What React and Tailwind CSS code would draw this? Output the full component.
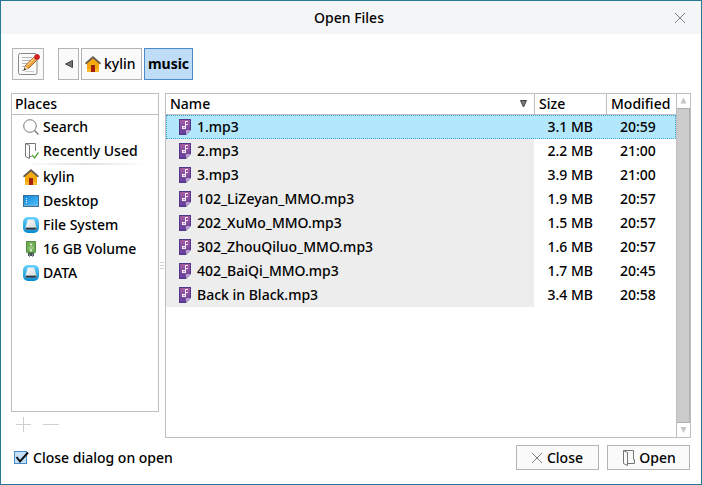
import { useState } from "react";

const files = [
  ["1.mp3", "3.1 MB", "20:59"],
  ["2.mp3", "2.2 MB", "21:00"],
  ["3.mp3", "3.9 MB", "21:00"],
  ["102_LiZeyan_MMO.mp3", "1.9 MB", "20:57"],
  ["202_XuMo_MMO.mp3", "1.5 MB", "20:57"],
  ["302_ZhouQiluo_MMO.mp3", "1.6 MB", "20:57"],
  ["402_BaiQi_MMO.mp3", "1.7 MB", "20:45"],
  ["Back in Black.mp3", "3.4 MB", "20:58"],
];

function HomeIcon() {
  return (
    <svg width="16" height="16" viewBox="0 0 16 16" className="shrink-0" aria-hidden="true">
      <path d="M2 7 8 2l6 5v9H2z" fill="#f5a90c" />
      <path d="M2 13h12v3H2z" fill="#f8bb2c" />
      <path d="M6 9h4v7H6z" fill="#a31e0c" />
      <path d="M6 9h4v1H6z" fill="#7c3510" />
      <path d="M8 0 0 7l1 1.4L8 2.6l7 5.8L16 7z" fill="#655a4c" />
    </svg>
  );
}

function SearchIcon() {
  return (
    <svg width="16" height="16" viewBox="0 0 16 16" className="shrink-0" fill="none" stroke="#777" aria-hidden="true">
      <circle cx="7" cy="7" r="6.3" />
      <path d="m11.5 11.5 4 4" strokeWidth="1.2" />
    </svg>
  );
}

function FolderIcon({ checked = false }) {
  return (
    <svg width="16" height="16" viewBox="0 0 16 16" className="shrink-0" fill="none" stroke="#777" aria-hidden="true">
      <path d="M2.500.5v13l4 2v-13l-4-2h10V8" />
      {checked ? (
        <>
          <path d="M6.500 13.500h2" />
          <path d="m9 12 2.500 3L15.500 9.500" stroke="#58a83b" strokeWidth="1.300" />
        </>
      ) : (
        <path d="M12.500 8v1.500h1v4h-7" />
      )}
    </svg>
  );
}

function DesktopIcon() {
  return (
    <svg width="16" height="16" viewBox="0 0 16 16" className="shrink-0" aria-hidden="true">
      <defs>
        <linearGradient id="screen" x1="0" x2="1" y1="0" y2="1">
          <stop stopColor="#1286d9" />
          <stop offset="1" stopColor="#4fc0fb" />
        </linearGradient>
      </defs>
      <path d="M0 2h16v12H0z" fill="#3d6f96" />
      <path d="M1 3h14v9H1z" fill="url(#screen)" />
      <path d="M3 5h1v1H3zm0 2h1v1H3zm0 2h1v1H3z" fill="#fff" />
      <path d="M1 12h14v1H1z" fill="#75b4da" />
    </svg>
  );
}

function DriveIcon() {
  return (
    <svg width="16" height="16" viewBox="0 0 16 16" className="shrink-0" aria-hidden="true">
      <defs>
        <linearGradient id="drive" x1="0" x2="0" y1="0" y2="1">
          <stop stopColor="#69d2fa" />
          <stop offset="1" stopColor="#078bd3" />
        </linearGradient>
        <linearGradient id="case" x1="0" x2="1" y1="0" y2="1">
          <stop stopColor="#fff" />
          <stop offset="1" stopColor="#cfd3d6" />
        </linearGradient>
      </defs>
      <rect width="16" height="16" rx="5" fill="url(#drive)" />
      <path d="M4.500 3.500Q4.500 2.500 5.500 2.500h5q1 0 1 1L13.500 10.500v2h-11v-2z" fill="url(#case)" />
      <path d="M2.500 10.500h11v2.500h-11z" fill="#4c6472" />
      <path d="M3.500 11h9v1h-9z" fill="#26343d" />
    </svg>
  );
}

function UsbIcon() {
  return (
    <svg width="16" height="16" viewBox="0 0 16 16" className="shrink-0" aria-hidden="true">
      <path d="M3 0h10v11l-1 1H4l-1-1z" fill="#568b43" />
      <path d="M4 1h8v10H4z" fill="#70ae53" />
      <path d="M8 10V4M6 6v1.500L8 9l2-1.500V5.500" fill="none" stroke="#c7e2b9" strokeWidth=".8" />
      <path d="M6.500 4 8 2l1.500 2z" fill="#e4f1dc" />
      <circle cx="8" cy="9.500" r="1" fill="#e4f1dc" />
      <path d="M5 12h6v3H5z" fill="#48535a" />
      <path d="M6 13h1v3H6zm3 0h1v3H9z" fill="#899198" />
    </svg>
  );
}

function MusicIcon() {
  return (
    <svg width="12" height="16" viewBox="0 0 12 16" className="shrink-0" aria-hidden="true">
      <defs>
        <linearGradient id="music" x1="0" x2="0" y1="0" y2="1">
          <stop stopColor="#a85ca4" />
          <stop offset="1" stopColor="#603e99" />
        </linearGradient>
      </defs>
      <path d="M0 0h12v11l-5 5H0z" fill="#51388c" />
      <path d="M1 1h10v9l-5 5H1z" fill="url(#music)" />
      <path d="M7 16v-5h5z" fill="#b7a0d0" />
      <path d="M6 2h3v1H7v2h2v1H7v4H3V7h3z" fill="#f5ebf7" />
      <path d="M4 8h2v1H4z" fill="#b58cc0" />
    </svg>
  );
}

function EditIcon() {
  return (
    <svg width="24" height="24" viewBox="0 0 24 24" className="shrink-0" aria-hidden="true">
      <path d="M4.500 1.500H19q2 0 2 2v17q0 2-2 2H4.500q-2 0-2-2v-17q0-2 2-2z" fill="#fafafa" stroke="#898a87" />
      <path d="M6 5.500h10M6 8.500h8M6 11.500h6M6 14.500h3M6 18.500h2" stroke="#b6b6b6" />
      <path d="M9 19.500h9" stroke="#ccc" />
      <path d="m8 18 1.800-5L18 5l3 3-8 8z" fill="#f3a33a" stroke="#8d5418" strokeWidth=".8" />
      <path d="m10.500 13 7.500-7.500 1 1-7.500 7.500z" fill="#ffc877" />
      <path d="m8 18 1.500-4 2.500 2.500z" fill="#ead7b5" />
      <path d="m7.700 18.300.8-2.300 1.500 1.500z" fill="#222" />
      <path d="m17.500 5.500 1.500-1.500 3 3-1.500 1.500z" fill="#bcc2c4" />
      <circle cx="21" cy="5" r="2.500" fill="#dc1d20" stroke="#a40a0d" strokeWidth=".6" />
    </svg>
  );
}

function CrossIcon() {
  return (
    <svg width="10" height="10" viewBox="0 0 10 10" fill="none" stroke="#808080" aria-hidden="true">
      <path d="m0 0 10 10M10 0 0 10" />
    </svg>
  );
}

const places = [
  ["Search", <SearchIcon />],
  ["Recently Used", <FolderIcon checked />],
  ["kylin", <HomeIcon />],
  ["Desktop", <DesktopIcon />],
  ["File System", <DriveIcon />],
  ["16 GB Volume", <UsbIcon />],
  ["DATA", <DriveIcon />],
];

export default function App() {
  const [selected, setSelected] = useState("1.mp3");

  return (
    <main className="flex min-h-screen flex-col border border-[#2a7898] bg-white font-['Noto_Sans',sans-serif] text-sm leading-5 font-medium text-black">
      <header className="grid h-[33px] grid-cols-[1fr_auto_1fr] items-center bg-[#f4f5f7] pr-4">
        <h1 className="col-start-2 pl-3 font-medium">Open Files</h1>
        <button aria-label="Close window" className="justify-self-end"><CrossIcon /></button>
      </header>

      <nav className="mx-[11px] mt-[14px] flex h-8 items-stretch" aria-label="Folder path">
        <button aria-label="Type a file name" className="mr-[14px] flex w-8 items-center justify-center border border-[#b4b4b4] bg-[#fafafa]"><EditIcon /></button>
        <button aria-label="Back" className="mr-0.5 flex w-[21px] items-center justify-center border border-[#b4b4b4] bg-[#fafafa]">
          <svg width="8" height="8" viewBox="0 0 8 8" aria-hidden="true"><path d="M7.500.5v7L.5 4z" fill="#777" stroke="#444" /></svg>
        </button>
        <button className="mr-0.5 flex w-[61px] items-center gap-[3px] border border-[#b4b4b4] bg-[#fafafa] pl-[3px]"><HomeIcon />kylin</button>
        <button className="w-[49px] border border-[#4a8ac6] bg-[#bfddf9] font-bold">music</button>
      </nav>

      <div className="mt-[13px] flex flex-1 pr-[10px] pl-[10px]">
        <aside className="flex w-[148px] shrink-0 flex-col">
          <section className="flex-1 border border-[#bfbfbf]">
            <h2 className="h-[21px] border-b border-[#bfbfbf] pl-[3px] font-medium">Places</h2>
            <ul>
              {places.map(([name, icon], i) => (
                <li key={name}>
                  {i === 2 && <hr className="mx-3 h-0.5 border-0 bg-linear-to-r from-transparent via-[#e2e2e2] to-transparent" />}
                  <button className="flex h-6 w-full items-center gap-1 pl-[11px] whitespace-nowrap">{icon}{name}</button>
                </li>
              ))}
            </ul>
          </section>
          <div className="flex h-[26px] items-center gap-[11px] pl-[5px]">
            <button aria-label="Add place"><svg width="16" height="16" stroke="#cfcfcf" aria-hidden="true"><path d="M0 7.500h15M7.500 0v15" /></svg></button>
            <button aria-label="Remove place"><svg width="16" height="16" stroke="#cfcfcf" aria-hidden="true"><path d="M0 7.500h16" /></svg></button>
          </div>
        </aside>

        <div className="flex w-[6px] shrink-0 flex-col items-center justify-center gap-0.5" role="separator" aria-orientation="vertical">
          <i className="h-px w-1 bg-[#cfcfcf]" /><i className="h-px w-1 bg-[#cfcfcf]" /><i className="h-px w-1 bg-[#cfcfcf]" />
        </div>

        <section className="flex min-w-0 flex-1 border border-[#bfbfbf]">
          <div className="min-w-0 flex-1">
            <table className="w-full table-fixed border-separate border-spacing-0">
              <colgroup><col /><col className="w-[72px]" /><col className="w-[70px]" /></colgroup>
              <thead>
                <tr className="h-[21px] text-left">
                  <th className="border-b border-[#bfbfbf] p-0 px-1 font-medium" aria-sort="ascending">
                    <button className="flex w-full items-center justify-between pr-0.5">Name
                      <svg width="9" height="8" viewBox="0 0 9 8" aria-hidden="true"><path d="M1.500.5h6l-3 6.500z" fill="#777" stroke="#444" /></svg>
                    </button>
                  </th>
                  <th className="border-b border-l border-[#bfbfbf] p-0 pl-1 font-medium"><button>Size</button></th>
                  <th className="border-b border-l border-[#bfbfbf] p-0 pl-1 font-medium"><button>Modified</button></th>
                </tr>
              </thead>
              <tbody>
                {files.map(([name, size, time]) => {
                  const active = name === selected;
                  return (
                    <tr key={name} onClick={() => setSelected(name)} className={active ? "h-6 bg-[#b3e7fb] outline-1 -outline-offset-1 outline-dotted outline-[#3da4cd]" : "h-6"}>
                      <td className={active ? "p-0 pl-[13px]" : "bg-[#ededed] p-0 pl-[13px]"}><div className="flex items-center gap-[6px]"><MusicIcon />{name}</div></td>
                      <td className="p-0 pr-[13px] text-right">{size}</td>
                      <td className="p-0 pl-[14px]">{time}</td>
                    </tr>
                  );
                })}
              </tbody>
            </table>
          </div>
          <div className="flex w-[14px] flex-col items-stretch border-l border-[#bfbfbf]" role="scrollbar" aria-valuenow={0} aria-orientation="vertical">
            <svg className="h-[14px] w-full" viewBox="0 0 13 14" aria-hidden="true"><path d="M3.500 9.500h6l-3-6z" fill="#c5c5c5" /></svg>
            <div className="flex-1 border-y border-r border-[#b0b0b0] bg-[#cbcbcb]" />
            <svg className="h-[14px] w-full" viewBox="0 0 13 14" aria-hidden="true"><path d="M3.500 4h6l-3 6z" fill="#c5c5c5" /></svg>
          </div>
        </section>
      </div>

      <footer className="mt-[7px] mb-[14px] flex h-[25px] items-stretch gap-2 pr-[11px] pl-[13px]">
        <label className="mr-auto flex items-center gap-[6px]">
          <span className="grid">
            <input type="checkbox" defaultChecked className="peer col-start-1 row-start-1 size-[13px] appearance-none border border-[#4a8ac6] bg-[#c5e0fa]" />
            <svg width="13" height="13" viewBox="0 0 13 13" className="pointer-events-none invisible col-start-1 row-start-1 overflow-visible peer-checked:visible" aria-hidden="true"><path d="m2.500 6 3.500 4.500L14 1.500" fill="none" stroke="#111" strokeWidth="2" /></svg>
          </span>
          Close dialog on open
        </label>
        <button className="flex w-[83px] items-center justify-center gap-[5px] border border-[#b4b4b4] bg-[#fafafa]"><CrossIcon />Close</button>
        <button className="flex w-[83px] items-center justify-center gap-0.5 border border-[#b4b4b4] bg-[#fafafa]"><FolderIcon />Open</button>
      </footer>
    </main>
  );
}
